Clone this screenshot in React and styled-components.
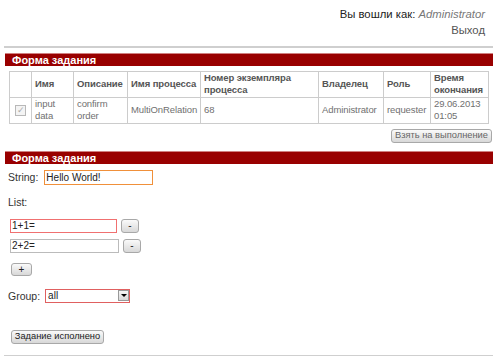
import React from "react";
import styled, { createGlobalStyle } from "styled-components";

const GlobalStyle = createGlobalStyle`
  html, body {
    margin: 0;
    padding: 0;
    background: #fff;
  }
  body {
    font-family: "Liberation Sans", Arial, sans-serif;
    font-size: 11px;
    color: #333;
  }
`;

const Page = styled.div`
  width: 500px;
  height: 356px;
  overflow: hidden;
  display: flex;
  flex-direction: column;
`;

const UserBox = styled.div`
  display: flex;
  flex-direction: column;
  align-items: flex-end;
  padding: 6px 15px 0 0;
  font-size: 11.3px;
  line-height: 16px;
  color: #222;
`;

const UserName = styled.span`
  font-style: italic;
  color: #777;
`;

const Logout = styled.span`
  color: #555;
`;

const Rule = styled.div`
  height: 2px;
  background: #cfcfcf;
  margin: ${p => p.$top || 0}px 7px 0 4px;
`;

const Section = styled.div`
  margin: ${p => p.$top || 0}px 7px 0 5px;
  display: flex;
  flex-direction: column;
`;

const Bar = styled.div`
  height: 12px;
  background: #990000;
  border-top: 1px solid #d08080;
  color: #fff;
  font-weight: bold;
  font-size: 11px;
  line-height: 12px;
  padding-left: 7px;
`;

const Table = styled.table`
  border-collapse: collapse;
  margin: 5px 0 0 4px;
  width: 479px;
  table-layout: fixed;
  font-size: 9.5px;
  line-height: 12px;
`;

const Row = styled.tr`
  height: 26px;
`;

const Th = styled.th`
  border: 1px solid #cccccc;
  text-align: left;
  font-weight: bold;
  color: #555;
  padding: 0 3px;
  vertical-align: middle;
  letter-spacing: -0.1px;
`;

const Td = styled.td`
  border: 1px solid #cccccc;
  color: #707070;
  padding: 0 3px;
  vertical-align: middle;
  text-align: ${p => (p.$center ? "center" : "left")};
  letter-spacing: -0.1px;
`;

const Check = styled.span`
  display: inline-block;
  width: 9px;
  height: 9px;
  border: 1px solid #b8b8b8;
  background: #f4f4f4;
  color: #aaa;
  font-size: 9px;
  line-height: 9px;
  text-align: center;
`;

const ButtonRow = styled.div`
  display: flex;
  justify-content: flex-end;
  padding: 5px 1px 0 0;
`;

const Button = styled.button`
  box-sizing: border-box;
  font-family: "Liberation Sans", Arial, sans-serif;
  font-size: ${p => p.$size || 10}px;
  color: ${p => (p.$muted ? "#666" : "#222")};
  background: linear-gradient(#fafafa, #d8d8d8);
  border: 1px solid #a8a8a8;
  border-radius: 3px;
  height: ${p => p.$h || 14}px;
  width: ${p => (p.$w ? p.$w + "px" : "auto")};
  padding: 0;
  line-height: 11px;
  white-space: nowrap;
  overflow: hidden;
  margin: 0;
`;

const Form = styled.div`
  display: flex;
  flex-direction: column;
  padding: 6px 0 0 3px;
  color: #333;
`;

const Field = styled.div`
  display: flex;
  align-items: center;
  gap: ${p => p.$gap || 6}px;
  margin-top: ${p => p.$top || 0}px;
  padding-left: ${p => p.$indent || 0}px;
  line-height: 12px;
`;

const Label = styled.span`
  font-size: 10.5px;
`;

const Input = styled.input`
  box-sizing: border-box;
  width: ${p => p.$w}px;
  height: ${p => p.$h || 14}px;
  border: 1px solid ${p => p.$border || "#bbb"};
  font-family: "Liberation Sans", Arial, sans-serif;
  font-size: 10px;
  color: #222;
  padding: 0 1px;
  margin: 0;
  outline: none;
`;

const Select = styled.div`
  box-sizing: border-box;
  width: 85px;
  height: 14px;
  border: 1px solid #e06060;
  display: flex;
  align-items: center;
  justify-content: space-between;
  padding-left: 2px;
  font-size: 10px;
  color: #222;
`;

const Arrow = styled.span`
  width: 11px;
  height: 11px;
  border: 1px solid #999;
  background: linear-gradient(#f6f6f6, #d8d8d8);
  display: flex;
  align-items: center;
  justify-content: center;
  box-sizing: border-box;
  &::after {
    content: "";
    border-left: 3px solid transparent;
    border-right: 3px solid transparent;
    border-top: 3px solid #000;
  }
`;

const columns = [22, 42, 54, 73, 118, 65, 47, 58];

export default function App() {
  return (
    <Page>
      <GlobalStyle />
      <UserBox>
        <span>
          Вы вошли как: <UserName>Administrator</UserName>
        </span>
        <Logout>Выход</Logout>
      </UserBox>
      <Rule $top={8} />
      <Section $top={5}>
        <Bar>Форма задания</Bar>
        <Table>
          <colgroup>
            {columns.map((w, i) => (
              <col key={i} style={{ width: w }} />
            ))}
          </colgroup>
          <thead>
            <Row>
              <Th />
              <Th>Имя</Th>
              <Th>Описание</Th>
              <Th>Имя процесса</Th>
              <Th>Номер экземпляра процесса</Th>
              <Th>Владелец</Th>
              <Th>Роль</Th>
              <Th>Время окончания</Th>
            </Row>
          </thead>
          <tbody>
            <Row>
              <Td $center>
                <Check>✓</Check>
              </Td>
              <Td>input data</Td>
              <Td>confirm order</Td>
              <Td>MultiOnRelation</Td>
              <Td>68</Td>
              <Td>Administrator</Td>
              <Td>requester</Td>
              <Td>29.06.2013 01:05</Td>
            </Row>
          </tbody>
        </Table>
        <ButtonRow>
          <Button $muted $w={101} $size={9.3}>Взять на выполнение</Button>
        </ButtonRow>
      </Section>
      <Section $top={8}>
        <Bar>Форма задания</Bar>
        <Form>
          <Field>
            <Label>String:</Label>
            <Input $w={109} $h={15} $border="#f0903a" defaultValue="Hello World!" />
          </Field>
          <Field $top={11}>
            <Label>List:</Label>
          </Field>
          <Field $top={11} $gap={4} $indent={2}>
            <Input $w={107} $border="#f07070" defaultValue="1+1=" />
            <Button $w={18} $h={14}>-</Button>
          </Field>
          <Field $top={6} $gap={4} $indent={2}>
            <Input $w={109} defaultValue="2+2=" />
            <Button $w={18} $h={14}>-</Button>
          </Field>
          <Field $top={10} $indent={3}>
            <Button $w={21} $h={13}>+</Button>
          </Field>
          <Field $top={13} $gap={5}>
            <Label>Group:</Label>
            <Select>
              all
              <Arrow />
            </Select>
          </Field>
          <Field $top={27} $indent={3}>
            <Button $w={93} $h={14} $size={9.3}>Задание исполнено</Button>
          </Field>
        </Form>
      </Section>
      <Rule $top={11} />
    </Page>
  );
}
